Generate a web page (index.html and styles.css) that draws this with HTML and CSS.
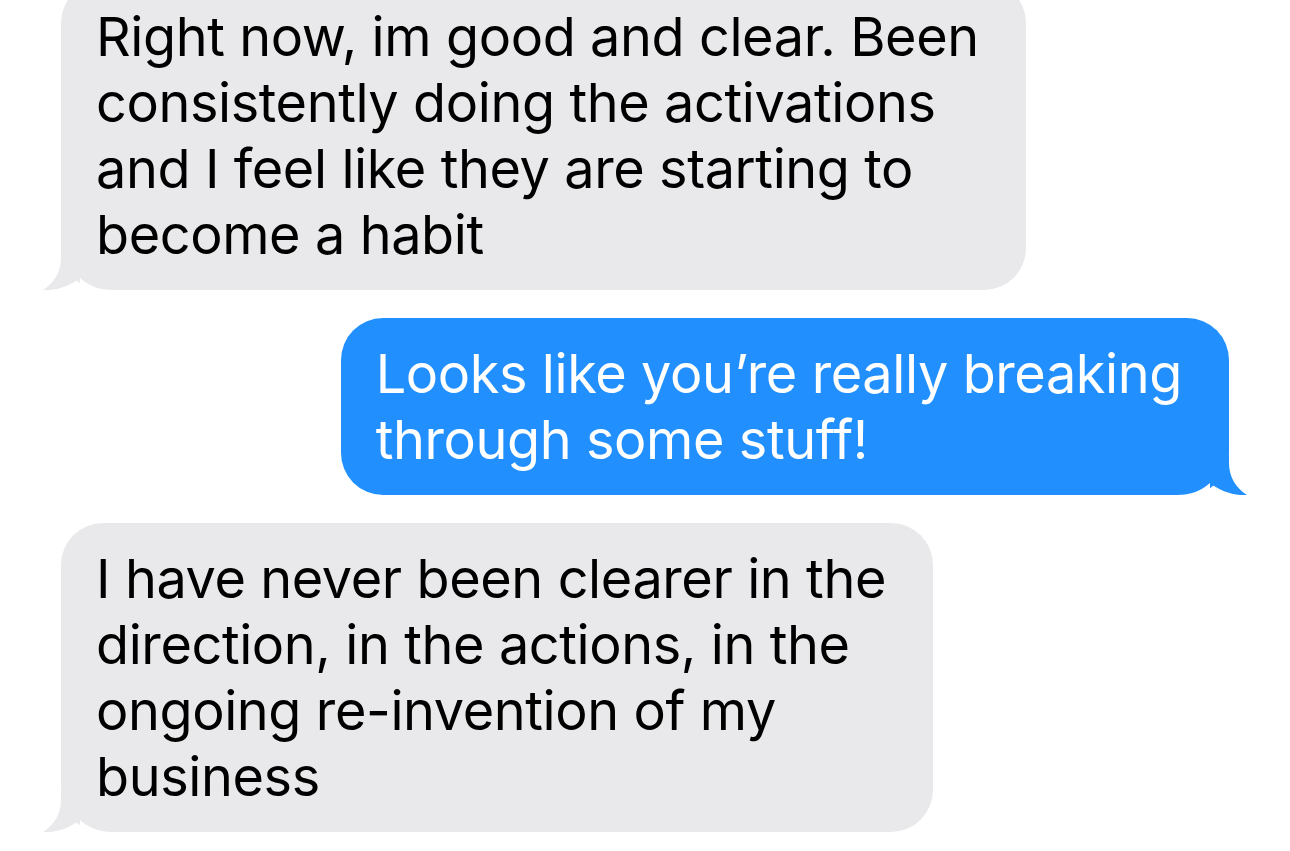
FILE: index.html
```html
<!DOCTYPE html>
<html lang="en">
<head>
    <meta charset="UTF-8">
    <meta name="viewport" content="width=device-width, initial-scale=1.0">
    <title>Messages</title>
    <link rel="stylesheet" href="styles.css">
</head>
<body>
    <div class="thread">
        <!-- incoming -->
        <div class="bubble received">
            <svg class="tail" viewBox="0 0 70 40" width="70" height="40">
                <path class="tail-fill" d="M18,0 L18,8 C18,22 11,33 0,40 C13,41 27,36 37,28 C46,36 56,40 70,40 L70,0 Z"/>
                <path class="tail-cut" d="M37,28 C46,36 56,40 70,40 L70,41 L37,41 Z"/>
            </svg>
            <p>Right now, im good and clear. Been<br>consistently doing the activations<br>and I feel like they are starting to<br>become a habit</p>
        </div>

        <!-- outgoing -->
        <div class="bubble sent">
            <svg class="tail" viewBox="0 0 70 40" width="70" height="40">
                <path class="tail-fill" d="M18,0 L18,8 C18,22 11,33 0,40 C13,41 27,36 37,28 C46,36 56,40 70,40 L70,0 Z"/>
                <path class="tail-cut" d="M37,28 C46,36 56,40 70,40 L70,41 L37,41 Z"/>
            </svg>
            <p>Looks like you’re really breaking<br>through some stuff!</p>
        </div>

        <div class="bubble received">
            <svg class="tail" viewBox="0 0 70 40" width="70" height="40">
                <path class="tail-fill" d="M18,0 L18,8 C18,22 11,33 0,40 C13,41 27,36 37,28 C46,36 56,40 70,40 L70,0 Z"/>
                <path class="tail-cut" d="M37,28 C46,36 56,40 70,40 L70,41 L37,41 Z"/>
            </svg>
            <p>I have never been clearer in the<br>direction, in the actions, in the<br>ongoing re-invention of my<br>business</p>
        </div>
    </div>
</body>
</html>
```

FILE: styles.css
```css
body {
    margin: 0;
    padding: 0;
    background-color: #fff;
    font-family: Inter, "Open Sans", sans-serif;
    overflow: hidden;
}

.thread {
    display: flex;
    flex-direction: column;
    gap: 28px;
    padding: 0 61px;
    margin-top: -19px;
}

.bubble {
    position: relative;
    max-width: 985px;
    width: fit-content;
    padding: 23px 47px 22px 35px;
    border-radius: 42px;
    font-size: 54px;
    line-height: 66px;
    letter-spacing: -0.4px;
    box-sizing: border-box;
}

.bubble p {
    position: relative;
    margin: 0;
}

.received {
    align-self: flex-start;
    background-color: #e9e9eb;
    color: #000;
}

.sent {
    align-self: flex-end;
    background-color: #2190fe;
    color: #fff;
}

.tail {
    position: absolute;
    bottom: 0;
    display: block;
}

.received .tail {
    left: -18px;
}

.sent .tail {
    right: -18px;
    transform: scaleX(-1);
}

.received .tail-fill {
    fill: #e9e9eb;
}

.sent .tail-fill {
    fill: #2190fe;
}

.tail-cut {
    fill: #fff;
}
```
